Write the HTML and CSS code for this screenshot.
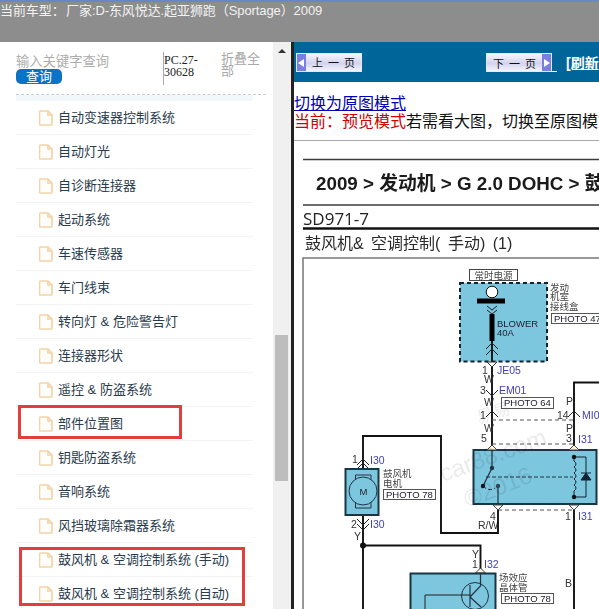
FILE: index.html
```html
<!DOCTYPE html>
<html lang="zh">
<head>
<meta charset="utf-8">
<title>当前车型</title>
<link rel="stylesheet" href="styles.css">
</head>
<body>
<svg class="defs" width="0" height="0" aria-hidden="true"><defs>
<symbol id="file" viewBox="0 0 14 16"><path d="M1.500 1h7.500l4 4v9a1 1 0 0 1-1 1h-10.500a1 1 0 0 1-1-1v-12a1 1 0 0 1 1-1zM9 1v4h4" fill="#fffdf9" stroke="#f2d4a8" stroke-width="1.700"/></symbol>
</defs></svg>
<header class="top">当前车型： 厂家:D-东风悦达.起亚狮跑（Sportage）2009</header>
<main class="main">
  <aside class="left">
    <div class="col">
      <div class="search">
        <div class="query"><div class="ph">输入关键字查询</div><div class="btn">查询</div></div>
        <div class="pc">PC.27-30628</div>
        <div class="fold">折叠全部</div>
      </div>
      <div class="dash"></div>
      <ul class="list">
        <li><svg class="ic"><use href="#file"/></svg>自动变速器控制系统</li>
        <li><svg class="ic"><use href="#file"/></svg>自动灯光</li>
        <li><svg class="ic"><use href="#file"/></svg>自诊断连接器</li>
        <li><svg class="ic"><use href="#file"/></svg>起动系统</li>
        <li><svg class="ic"><use href="#file"/></svg>车速传感器</li>
        <li><svg class="ic"><use href="#file"/></svg>车门线束</li>
        <li><svg class="ic"><use href="#file"/></svg>转向灯 &amp; 危险警告灯</li>
        <li><svg class="ic"><use href="#file"/></svg>连接器形状</li>
        <li><svg class="ic"><use href="#file"/></svg>遥控 &amp; 防盗系统</li>
        <li><svg class="ic"><use href="#file"/></svg>部件位置图</li>
        <li><svg class="ic"><use href="#file"/></svg>钥匙防盗系统</li>
        <li><svg class="ic"><use href="#file"/></svg>音响系统</li>
        <li><svg class="ic"><use href="#file"/></svg>风挡玻璃除霜器系统</li>
        <li><svg class="ic"><use href="#file"/></svg>鼓风机 &amp; 空调控制系统 (手动)</li>
        <li><svg class="ic"><use href="#file"/></svg>鼓风机 &amp; 空调控制系统 (自动)</li>
      </ul>
    </div>
    <div class="scroll"><div class="up"></div><div class="thumb"></div></div>
    <div class="mark mark-a"></div>
    <div class="mark mark-b"></div>
  </aside>
  <section class="right">
    <nav class="bar">
      <a class="pg pg-prev"><span class="cap cap-l"></span><span class="pg-t">上一页</span></a>
      <span class="under-wrap"><a class="pg pg-next"><span class="pg-t">下一页</span><span class="cap cap-r"></span></a><span class="tail"></span></span>
      <a class="refresh">[刷新</a>
    </nav>
    <div class="mode">
      <a class="link">切换为原图模式</a>
      <div class="line"><span class="red">当前：预览模式</span>若需看大图，切换至原图模式</div>
    </div>
    <svg class="dia" viewBox="294 141 305 468" width="305" height="468" role="img">
      <rect x="294" y="141" width="305" height="468" fill="#fff"/>
      <path d="M303 159.500H599M303 205H599" stroke="#3c3c3c" stroke-width="1.500"/>
      <path d="M303 228.500H599" stroke="#111" stroke-width="2.500"/>
      <text class="t-h" x="316" y="190">2009 &gt; 发动机 &gt; G 2.0 DOHC &gt; 鼓风机</text>
      <text class="t-sd" x="303" y="225">SD971-7</text>
      <text class="t-ti" x="305" y="249">鼓风机&amp; 空调控制( 手动) (1)</text>
      <path d="M303 610V258H600" fill="none" stroke="#777" stroke-width="1.500"/>

      <rect x="469.500" y="269.500" width="48" height="11" fill="#fff" stroke="#444"/>
      <text class="t-s c" x="493.500" y="279">常时电源</text>
      <rect x="460" y="283" width="87" height="78.500" fill="#7cc6de" stroke="#123" stroke-width="2" stroke-dasharray="4 3"/>
      <circle cx="492" cy="292" r="5.800" fill="#fff" stroke="#111"/>
      <path d="M477 301H505" stroke="#000" stroke-width="5"/>
      <path d="M487 306l5 4 5-4M487 310l5 4 5-4" fill="none" stroke="#222"/>
      <path d="M492 314V341" stroke="#000" stroke-width="5"/>
      <path d="M492 341V446" stroke="#111" stroke-width="1.900"/>
      <path d="M486 349l6-6 6 6M486 355l6-6 6 6" fill="none" stroke="#222"/>
      <text class="t-m" x="497" y="327">BLOWER</text>
      <text class="t-m" x="497" y="336">40A</text>
      <text class="t-s" x="550" y="291">发动</text>
      <text class="t-s" x="550" y="300">机室</text>
      <text class="t-s" x="550" y="310">接线盒</text>
      <rect x="551.500" y="313.500" width="60" height="10" fill="#fff" stroke="#555"/>
      <text class="t-m" x="554" y="322">PHOTO 47</text>

      <path d="M487 362l5 5 5-5z" fill="#fff" stroke="#333"/>
      <text class="t-l" x="482" y="374">1</text>
      <text class="t-b" x="497" y="374">JE05</text>
      <text class="t-l" x="484" y="383">W</text>
      <text class="t-l" x="480" y="394">3</text>
      <path d="M486 390l6 6 6-6" fill="none" stroke="#222"/>
      <text class="t-b" x="499" y="394">EM01</text>
      <rect x="501.500" y="397.500" width="52" height="11" fill="#fff" stroke="#555"/>
      <text class="t-m" x="504" y="406">PHOTO 64</text>
      <text class="t-l" x="484" y="406">W</text>
      <path d="M486 417l6-6 6 6" fill="none" stroke="#222"/>
      <text class="t-l" x="480" y="419">1</text>
      <text class="t-l" x="484" y="432">W</text>
      <text class="t-l" x="481" y="442">5</text>

      <path d="M574 609V382.500H599" fill="none" stroke="#111" stroke-width="1.900"/>
      <text class="t-l" x="566" y="405">P</text>
      <text class="t-l" x="557" y="419">14</text>
      <path d="M568 417l6-6 6 6" fill="none" stroke="#222"/>
      <text class="t-b" x="582" y="419">MI01</text>
      <text class="t-l" x="566" y="432">P</text>
      <text class="t-l" x="566" y="442">3</text>
      <text class="t-b" x="578" y="443">I31</text>
      <path d="M492 420H574M492 444H574" fill="none" stroke="#555" stroke-dasharray="4 3"/>

      <rect x="473.500" y="450" width="123" height="54" fill="#7cc6de" stroke="#173646" stroke-width="2"/>
      <path d="M487 450l5-5 5 5zM569 450l5-5 5 5z" fill="#fff3d8" stroke="#444"/>
      <path d="M492 450V468L483 486M498 504V486" fill="none" stroke="#234" stroke-width="1.200"/>
      <circle cx="492" cy="468" r="2.200" fill="#234"/><circle cx="483" cy="486" r="2.200" fill="#111"/><circle cx="498" cy="486" r="2.200" fill="#345"/>
      <path d="M486 477H573M483 486q6 6 12 2" fill="none" stroke="#234" stroke-dasharray="4 2"/>
      <path d="M574 457v4q4 3 0 6q4 3 0 6q4 3 0 6q4 3 0 6q4 3 0 6v6" fill="none" stroke="#123"/>
      <path d="M574 457H586V497H574" fill="none" stroke="#123"/>
      <path d="M581 480h10l-5-7zM581 473h10" fill="#123" stroke="#123"/>
      <circle cx="574" cy="457" r="2.200" fill="#111"/><circle cx="574" cy="497" r="2.200" fill="#111"/>
      <path d="M493 505l5 5 5-5zM569 505l5 5 5-5z" fill="#fff" stroke="#444"/>
      <path d="M498 510H574" stroke="#555" stroke-dasharray="4 3"/>
      <text class="t-l" x="490" y="520">4</text>
      <text class="t-l" x="478" y="529">R/W</text>
      <text class="t-l" x="565" y="520">1</text>
      <text class="t-b" x="578" y="520">I31</text>
      <text class="t-l" x="565" y="587">B</text>
      <path d="M498 510V533H441V436H363V469M363 515V609M363 545.500H480.500V573" fill="none" stroke="#111" stroke-width="1.900"/>
      <circle cx="363" cy="545.500" r="3" fill="#111"/>

      <path d="M357 465l6-6 6 6M357 469l6-6 6 6" fill="none" stroke="#222"/>
      <text class="t-l" x="352" y="463">1</text>
      <text class="t-b" x="370" y="464">I30</text>
      <rect x="345.500" y="469" width="33" height="46" fill="#7cc6de" stroke="#173646" stroke-width="2"/>
      <path d="M355.500 482V475H371V482M355.500 500V508H371V500" fill="none" stroke="#234"/>
      <circle cx="363" cy="491" r="14" fill="#7cc6de" stroke="#234"/>
      <text class="t-m c" x="363.500" y="495">M</text>
      <text class="t-s" x="383" y="477">鼓风机</text>
      <text class="t-s" x="383" y="487">电机</text>
      <rect x="383.500" y="489.500" width="52" height="10" fill="#fff" stroke="#555"/>
      <text class="t-m" x="386" y="498">PHOTO 78</text>
      <path d="M357 519l6 6 6-6M357 524l6 6 6-6" fill="none" stroke="#222"/>
      <text class="t-l" x="351" y="528">2</text>
      <text class="t-b" x="370" y="528">I30</text>
      <text class="t-l" x="354" y="540">Y</text>
      <text class="t-l" x="472" y="558">Y</text>
      <text class="t-l" x="472" y="568">1</text>
      <text class="t-b" x="484" y="568">I32</text>

      <path d="M475.500 573l5-5 5 5z" fill="#fff3d8" stroke="#444"/>
      <rect x="410.500" y="573.500" width="85" height="45" fill="#7cc6de" stroke="#173646" stroke-width="2"/>
      <circle cx="475" cy="596" r="13.500" fill="#7cc6de" stroke="#234"/>
      <path d="M470 585V607M470 597L480.500 586V573M470 597L481 607" fill="none" stroke="#234" stroke-width="1.200"/>
      <path d="M425 610V595H470" fill="none" stroke="#222"/>
      <text class="t-s" x="499" y="581">场效应</text>
      <text class="t-s" x="499" y="591">晶体管</text>
      <rect x="501.500" y="593.500" width="52" height="10" fill="#fff" stroke="#555"/>
      <text class="t-m" x="504" y="602">PHOTO 78</text>

      <text class="wm" transform="translate(479 424) rotate(-18)">易易</text>
      <text class="wm wm-b" transform="translate(443 482) rotate(-20)">car88.com</text>
      <text class="wm wm-b" transform="translate(468 508) rotate(-22)">©2016</text>
    </svg>
  </section>
</main>
</body>
</html>
```
FILE: styles.css
```css
* { box-sizing: border-box; }
html, body { margin: 0; height: 100%; overflow: hidden; background: #fff; }
body { width: 599px; height: 609px; display: flex; flex-direction: column; font-family: "Liberation Sans", "Noto Sans CJK SC", sans-serif; font-size: 13px; }
.defs { display: block; position: absolute; }

.top { height: 42px; flex: none; background: #8d8d8d; border-top: 2px solid #6a86c8; color: #f2f2f2; font-size: 13px; line-height: 16px; padding-top: 1px; white-space: pre; word-spacing: -2px; letter-spacing: -0.090px; }

.main { flex: 1; min-height: 0; display: flex; }
.left { width: 291px; flex: none; display: flex; position: relative; }
.col { width: 273px; flex: none; padding-left: 16px; }
.search { height: 52px; display: flex; padding-top: 10px; }
.query { width: 147px; padding-top: 2px; }
.ph { color: #adadad; font-size: 13.300px; line-height: 15px; }
.btn { width: 46px; height: 15px; background: #0b72c8; border-radius: 5px; color: #fff; text-align: center; line-height: 15px; }
.pc { width: 58px; height: 33px; border-left: 1px solid #aaa; font-family: "Liberation Serif", serif; font-size: 12px; line-height: 12px; padding-top: 2px; color: #222; padding-right: 14px; }
.fold { width: 40px; color: #a8a8a8; line-height: 12px; padding-top: 1px; }
.dash { width: 250px; border-top: 1px dashed #c4ccd4; }
.list { list-style: none; margin: 0; padding: 6px 0 0; width: 237px; background: linear-gradient(#f2f7fb 6px, #fff 6px); }
.list li { height: 34px; display: flex; align-items: center; border-bottom: 1px solid #f3f3f3; color: #2a3b4c; padding: 0 0 2px 23px; font-size: 13px; white-space: pre; }
.ic { width: 14px; height: 16px; margin: 2px 5px 0 0; flex: none; }

.scroll { width: 18px; flex: none; background: #f0f0f0; padding: 0 3px 0 2px; }
.up { width: 0; height: 0; margin: 7px auto 0; border: 4px solid transparent; border-top: 0; border-bottom: 4px solid #333; }
.thumb { height: 146px; margin-top: 282px; background: #bdbdbd; }

.mark { position: absolute; border: 3px solid #e23e3e; pointer-events: none; }
.mark-a { left: 18px; top: 363px; width: 164px; height: 34px; }
.mark-b { left: 19px; top: 505px; width: 226px; height: 59px; }

.right { flex: 1; min-width: 0; border-left: 3px solid #222; overflow: hidden; }
.bar { height: 40px; background: #006699; display: flex; align-items: center; white-space: nowrap; padding-left: 2px; }
.pg { width: 66px; height: 19px; display: flex; align-items: center; background: linear-gradient(#f6f6fc, #d3d3ee 55%, #f4f4fb); border: 1px solid #e4e7f4; font-size: 11px; color: #111; }
.pg-t { flex: 1; text-align: center; letter-spacing: 5px; padding-left: 5px; }
.cap { width: 9px; height: 100%; background: #7b7fe0; position: relative; flex: none; }
.cap-l::after, .cap-r::after { content: ""; position: absolute; top: 5px; border: 4px solid transparent; }
.cap-l::after { left: -3px; border-right: 6px solid #fff; }
.cap-r::after { right: -3px; border-left: 6px solid #fff; }
.pg-prev { margin-right: 124px; }
.under-wrap { display: flex; align-items: flex-end; height: 20px; }
.tail { width: 5px; border-bottom: 1px solid #fff; }
.refresh { margin-left: 9px; color: #fff; font-size: 14px; font-weight: bold; text-decoration: underline; }

.mode { height: 59px; font-size: 16px; line-height: 18px; padding-top: 13px; white-space: nowrap; border-bottom: 1px solid #aaa; }
.link { color: #0000b0; text-decoration: underline; display: block; }
.line { color: #111; }
.red { color: #d00000; }

.dia { display: block; filter: blur(.3px); }
.dia text { font-family: "Liberation Sans", "Noto Sans CJK SC", sans-serif; }
.dia .t-h { font-size: 18.800px; font-weight: bold; fill: #1a1a1a; }
.dia .t-sd { font-family: "Open Sans", sans-serif; font-size: 17px; fill: #222; }
.dia .t-ti { font-size: 16px; word-spacing: 3px; fill: #2a2a2a; }
.dia .t-s { font-size: 9.500px; fill: #444; }
.dia .t-m { font-size: 9.500px; fill: #223; }
.dia .t-l { font-size: 10.500px; fill: #333; }
.dia .t-b { font-size: 10.500px; fill: #4040b8; }
.dia .c { text-anchor: middle; }
.dia .wm { font-size: 17px; fill: #000; opacity: .08; }
.dia .wm-b { font-size: 24px; }
```
